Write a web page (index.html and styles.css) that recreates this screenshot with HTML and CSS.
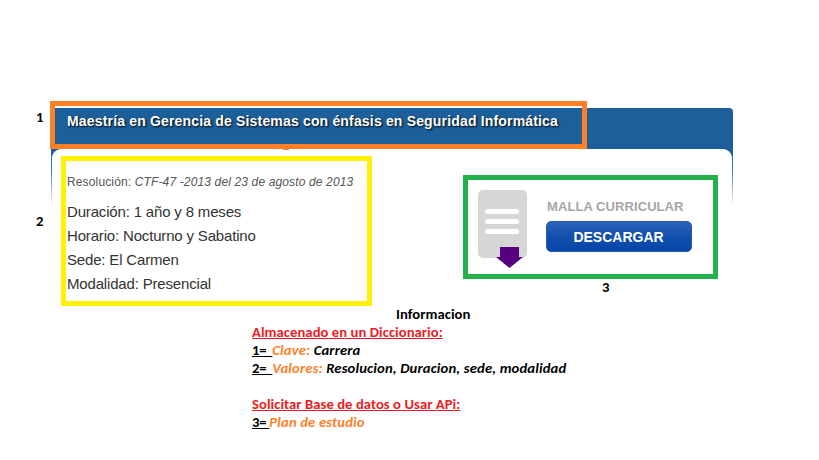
FILE: index.html
```
<!DOCTYPE html>
<html lang="es">
<head>
<meta charset="utf-8">
<title>Maestría en Gerencia de Sistemas</title>
<link rel="stylesheet" href="styles.css">
</head>
<body>
<main class="page">
  <section class="card">
    <header class="card-header">
      <h1 class="title">Maestría en Gerencia de Sistemas con énfasis en Seguridad Informática</h1>
      <div class="mark-title"></div>
    </header>
    <div class="card-body">
      <div class="panel">
        <div class="details">
          <p class="resolution">Resolución: <em>CTF-47 -2013 del 23 de agosto de 2013</em></p>
          <p class="row">Duración: 1 año y 8 meses</p>
          <p class="row">Horario: Nocturno y Sabatino</p>
          <p class="row">Sede: El Carmen</p>
          <p class="row">Modalidad: Presencial</p>
        </div>
        <div class="download">
          <svg class="doc" width="50" height="80" viewBox="0 0 50 80">
            <rect x="0" y="0" width="49" height="68" rx="5" fill="#d6d6d6"/>
            <path d="M9.5 21.5H38.5M9.5 31.5H38.5M9.5 41.5H38.5" stroke="#fff" stroke-width="5" stroke-linecap="round"/>
            <path d="M22 57H41V67H45L31.5 78L18 67H22Z" fill="#560080"/>
          </svg>
          <div class="action">
            <span class="caption">MALLA CURRICULAR</span>
            <a class="button">DESCARGAR</a>
          </div>
        </div>
      </div>
    </div>
  </section>
  <section class="notes">
    <p class="heading"><span>Informacion</span></p>
    <p class="red n1">Almacenado en un Diccionario:</p>
    <p class="n2"><u>1=&nbsp; </u><i class="key">Clave:</i> <i>Carrera</i></p>
    <p class="n3"><u>2=&nbsp; </u><i class="key">Valores:</i> <i>Resolucion, Duracion, sede, modalidad</i></p>
    <p class="red n4">Solicitar Base de datos o Usar APi:</p>
    <p class="n5"><u>3= </u><i class="key">Plan de estudio</i></p>
  </section>
  <b class="pin one">1</b>
  <b class="pin two">2</b>
  <b class="pin three">3</b>
</main>
</body>
</html>
```
FILE: styles.css
```
* { box-sizing: border-box; }
body { margin: 0; background: #fff; font-family: "Liberation Sans", Arial, sans-serif; }
p, h1 { margin: 0; white-space: nowrap; }
.page { position: relative; width: 819px; height: 460px; padding: 108px 0 0 51px; overflow: hidden; }
.card { width: 682px; height: 197px; }
.card-header { position: relative; height: 41px; padding: 5px 0 0 16px; background: #1c5f9a; border-radius: 4px 4px 0 0; }
.title { font-size: 14px; line-height: 17px; color: #fff; text-shadow: 1px 1px 2px #000; letter-spacing: 0.17px; }
.mark-title { position: absolute; left: -1px; top: -7px; width: 537px; height: 48px; border: 5px solid #ff7f27; }
.mark-title::before { content: ""; position: absolute; left: 0; top: 0; width: 100%; height: 2px; background: #fff; }
.mark-title::after { content: ""; position: absolute; left: 228px; bottom: -6px; width: 6px; height: 1px; background: #ff7f27; }
.card-body { height: 157px; padding: 0 1px; background: linear-gradient(#1c5f9a, #3d759f 20px, #fff 57px); }
.panel { display: flex; align-items: flex-start; gap: 91px; height: 157px; padding-left: 9px; background: #fff; border-radius: 9px 9px 0 0; }
.details { width: 311px; height: 150px; margin-top: 7px; padding: 14px 0 0 1px; border: 5px solid #fff200; color: #333; }
.resolution { font-size: 12px; line-height: 14px; margin-bottom: 11px; color: #555; letter-spacing: 0.14px; }
.row { font-size: 15px; line-height: 24px; letter-spacing: -0.17px; }
.download { display: flex; gap: 18px; width: 255px; height: 104px; margin-top: 26px; padding: 10px 0 0 10px; border: 5px solid #22b14c; }
.doc { flex: none; }
.action { display: flex; flex-direction: column; }
.caption { margin: 9px 0 6px 1px; font-size: 13px; font-weight: bold; line-height: 16px; color: #a6a6a6; white-space: nowrap; letter-spacing: 0.08px; }
.button { width: 146px; height: 31px; padding-right: 1px; border-radius: 5px; background: linear-gradient(#2f62b8, #1250ad 50%, #0445a8); border: 1px solid #2459b5; color: #fff; font-size: 14px; font-weight: bold; line-height: 31px; text-align: center; }
.notes { margin-left: 201px; font-family: Carlito, Lato, sans-serif; font-size: 14.67px; font-weight: bold; line-height: 18px; color: #000; letter-spacing: 0.05px; }
.heading { padding-left: 144px; }
.notes i { letter-spacing: 0.15px; }
.notes u { letter-spacing: -0.25px; }
.red { color: #ed1c24; text-decoration: underline; }
.key { color: #ff7f27; }
.n4 { margin-top: 18px; }
.pin { position: absolute; font: bold 14.67px/18px Carlito, Lato, sans-serif; }
.one { left: 36px; top: 108px; }
.two { left: 36px; top: 212px; }
.three { left: 602px; top: 278px; }
```
